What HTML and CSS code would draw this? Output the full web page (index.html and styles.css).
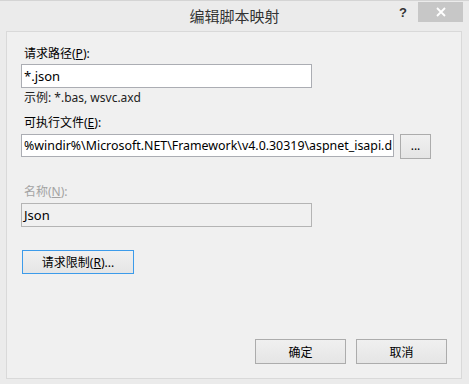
FILE: index.html
```html
<!DOCTYPE html>
<html lang="zh-CN">
<head>
<meta charset="utf-8">
<title>编辑脚本映射</title>
<link rel="stylesheet" href="styles.css">
</head>
<body>
<div class="window">
  <div class="titlebar">
    <div class="title">编辑脚本映射</div>
    <div class="help">?</div>
    <div class="close">
      <svg width="10" height="10" viewBox="0 0 10 10"><path d="M1 1 L9 9 M9 1 L1 9" stroke="#ffffff" stroke-width="1.8" fill="none"/></svg>
    </div>
  </div>
  <div class="client">
    <div class="label l1">请求路径(<u>P</u>):</div>
    <div class="field f1">*.json</div>
    <div class="hint">示例: *.bas, wsvc.axd</div>
    <div class="label l2">可执行文件(<u>E</u>):</div>
    <div class="row">
      <div class="field f2">%windir%\Microsoft.NET\Framework\v4.0.30319\aspnet_isapi.d</div>
      <div class="btn browse">...</div>
    </div>
    <div class="label l3 disabled">名称(<u>N</u>):</div>
    <div class="field f3 readonly">Json</div>
    <div class="btn limits">请求限制(<u>R</u>)...</div>
    <div class="footer">
      <div class="btn action">确定</div>
      <div class="btn action">取消</div>
    </div>
  </div>
</div>
</body>
</html>
```
FILE: styles.css
```css
html, body {
  margin: 0;
  padding: 0;
}
body {
  width: 469px;
  height: 384px;
  background: #ebebeb;
  font-family: "Noto Sans", "Noto Sans CJK SC", sans-serif;
  font-size: 12px;
  color: #000;
  overflow: hidden;
}
.window {
  width: 469px;
  height: 384px;
  box-sizing: border-box;
  border-top: 1px solid #d4d4d4;
}
.titlebar {
  position: relative;
  height: 30px;
}
.title {
  text-align: center;
  font-family: "Noto Sans CJK SC", sans-serif;
  font-size: 15px;
  line-height: 30px;
  color: #333;
}
.help {
  position: absolute;
  left: 399px;
  top: 4px;
  font-family: "Liberation Sans", sans-serif;
  font-weight: bold;
  font-size: 13px;
  color: #333;
}
.close {
  position: absolute;
  left: 418px;
  top: 1px;
  width: 45px;
  height: 20px;
  background: #c7c7c7;
  display: flex;
  align-items: center;
  justify-content: center;
}
.close svg { display: block; }
.client {
  margin: 0 7px 0 6px;
  height: 348px;
  box-sizing: border-box;
  border: 1px solid #d9d9d9;
  background: #f0f0f0;
  padding: 0 14px 14px 14px;
  display: flex;
  flex-direction: column;
  align-items: flex-start;
}
.label, .hint {
  line-height: 16px;
  height: 16px;
  padding-left: 3px;
  white-space: nowrap;
}
.hint { color: #222; }
.l1 { margin-top: 14px; }
.l2 { margin-top: 9px; }
.l3 { margin-top: 25px; }
.disabled { color: #a3a3a3; }
.field {
  box-sizing: border-box;
  border: 1px solid #abadb3;
  background: #fff;
  height: 24px;
  line-height: 22px;
  padding-left: 2px;
  white-space: nowrap;
  overflow: hidden;
  font-size: 13px;
}
.f1 { width: 291px; margin-top: 2px; }
.hint { margin-top: 2px; }
.row {
  display: flex;
  align-items: flex-start;
  gap: 6px;
  margin-top: 3px;
}
.f2 { width: 373px; height: 23px; line-height: 21px; font-size: 12.4px; }
.f3 { width: 291px; margin-top: 3px; }
.readonly { background: #f0f0f0; border-color: #b4b4b4; }
.btn {
  box-sizing: border-box;
  border: 1px solid #acacac;
  background: linear-gradient(#f0f0f0, #e5e5e5);
  display: flex;
  align-items: center;
  justify-content: center;
  white-space: nowrap;
}
.browse { width: 31px; height: 25px; padding-bottom: 2px; }
.limits {
  width: 112px;
  height: 24px;
  margin-top: 23px;
  margin-left: 1px;
  border-color: #3c9bea;
}
.footer {
  margin-top: auto;
  align-self: stretch;
  display: flex;
  justify-content: flex-end;
  gap: 10px;
}
.action { width: 91px; height: 25px; }
u { text-underline-offset: 1px; }
```
